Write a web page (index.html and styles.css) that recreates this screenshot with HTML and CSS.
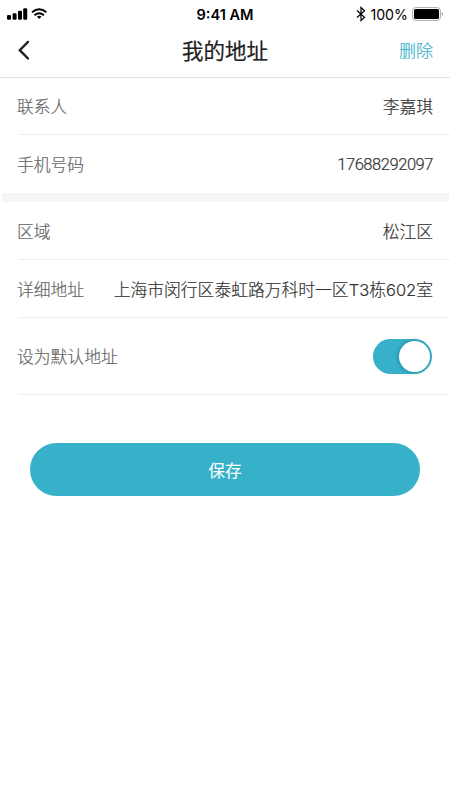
FILE: index.html
```
<!DOCTYPE html>
<html lang="zh-CN">
<head>
<meta charset="utf-8">
<title>我的地址</title>
<link rel="stylesheet" href="styles.css">
</head>
<body>
<div class="status">
  <svg class="signal" width="42" height="14" viewBox="0 0 42 14"><rect x="1" y="7.9" width="4" height="4.8" rx="1.2"/><rect x="6.6" y="6.2" width="4" height="6.5" rx="1.2"/><rect x="12" y="3.8" width="4" height="8.9" rx="1.2"/><rect x="17.2" y="1.2" width="4" height="11.5" rx="1.2"/><g fill="none" stroke="#000" stroke-width="1.9"><path d="M26 5.3Q33.2-.9 40.4 5.3"/><path d="M28.5 8.2Q33.2 4.2 37.9 8.2"/></g><path d="M30.9 9.6Q33.2 8 35.5 9.6L33.2 12Z"/></svg>
  <span class="time">9:41 AM</span>
  <div class="power">
    <svg width="10" height="16" viewBox="0 0 10 16" fill="none" stroke="#000" stroke-width="1.2"><path d="M1 4.5L8.5 11.2L5 14.5V1.5L8.5 4.8L1 11.5"/></svg>
    <span class="pct">100%</span>
    <svg width="32" height="14" viewBox="0 0 32 14"><rect x=".6" y=".6" width="27.8" height="12.8" rx="3" fill="none" stroke="#aaa"/><rect x="2" y="2" width="25" height="10" rx="1.5"/><path d="M29.8 5Q31.8 7 29.8 9Z" fill="#777"/></svg>
  </div>
</div>
<header class="nav">
  <svg width="14" height="22" viewBox="0 0 14 22" fill="none" stroke="#222" stroke-width="2.4" stroke-linecap="round"><path d="M11 2.9L2.8 11.2L11 19.5"/></svg>
  <h1>我的地址</h1>
  <span class="delete">删除</span>
</header>
<main>
  <div class="row first"><span class="label">联系人</span><span class="value">李嘉琪</span></div>
  <div class="row last"><span class="label">手机号码</span><span class="value phone">17688292097</span></div>
  <div class="gap"></div>
  <div class="row"><span class="label">区域</span><span class="value">松江区</span></div>
  <div class="row"><span class="label">详细地址</span><span class="value">上海市闵行区泰虹路万科时一区<span class="latin">T3</span>栋<span class="latin">602</span>室</span></div>
  <div class="row tall"><span class="label">设为默认地址</span><span class="switch"></span></div>
  <button class="save">保存</button>
</main>
</body>
</html>
```
FILE: styles.css
```
* { box-sizing: border-box; }
body { margin: 0; width: 450px; height: 800px; background: #fff; color: #333; font-family: "Noto Sans CJK SC", sans-serif; overflow: hidden; }
.status { height: 28px; display: grid; grid-template-columns: 1fr auto 1fr; align-items: center; padding: 0 6px; font: 14.5px/20px Inter, sans-serif; color: #000; }
.time { font-weight: 600; font-size: 14.6px; padding-top: 1px; }
.power { display: flex; justify-content: flex-end; align-items: center; gap: 4px; }
.pct { font-size: 14.2px; padding-top: 1px; }
.nav { height: 50px; padding: 0 17px 6px; display: grid; grid-template-columns: 1fr auto 1fr; align-items: center; border-bottom: 1px solid #e2e2e2; }
h1 { margin: 0; font-size: 21.5px; line-height: 30px; font-weight: 400; color: #222; -webkit-text-stroke: .2px #222; }
.delete { justify-self: end; color: #37b1ca; font-size: 17px; font-weight: 300; -webkit-text-stroke: .2px #37b1ca; }
.row { height: 58px; display: flex; align-items: center; justify-content: space-between; margin-left: 18px; padding-right: 17px; border-bottom: 1px solid #eee; font-size: 16.8px; font-weight: 300; -webkit-text-stroke: .2px currentColor; }
.label { color: #666; margin-left: -1px; }
.first { height: 57px; }
.last { border-bottom: 0; }
.phone { font: 300 16.5px Roboto, sans-serif; letter-spacing: -.45px; }
.latin { font-family: Inter, sans-serif; font-size: 16.5px; }
.gap { height: 9px; margin: 0 1px 0 2px; background: #f5f5f5; }
.tall { height: 77px; }
.switch { width: 59px; height: 35px; margin-right: 1px; border-radius: 18px; background: #37b1ca; padding: 2px; display: flex; justify-content: flex-end; }
.switch::after { content: ""; width: 31px; height: 31px; border-radius: 50%; background: #fff; box-shadow: -1px 0 4px rgba(0, 50, 70, .35); }
.save { display: block; width: 390px; height: 53px; margin: 48px 30px 0; border: 0; border-radius: 27px; background: #37b1ca; color: #fff; font: 400 16.8px "Noto Sans CJK SC", sans-serif; }
```
